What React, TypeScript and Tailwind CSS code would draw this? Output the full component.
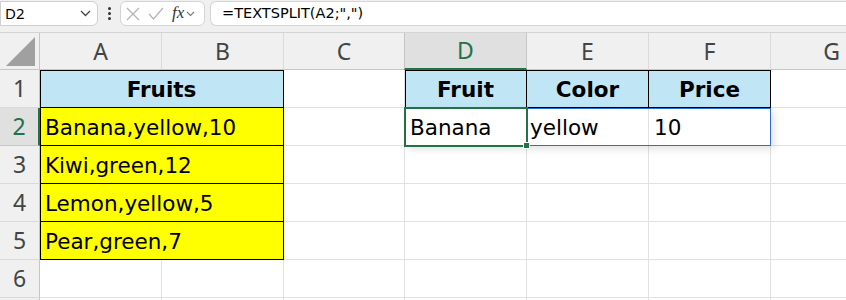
import React from "react";

const cols = ["A", "B", "C", "D", "E", "F", "G"];
const cellFont = { fontFamily: '"DejaVu Sans", sans-serif' };
const headFont = { fontFamily: '"Noto Sans", "Open Sans", sans-serif' };

function ColHeader({ label, active }: { label: string; active?: boolean }) {
  return (
    <div
      style={headFont}
      className={
        active
          ? "flex items-center justify-center bg-[#e0e0e0] border-x border-[#c6c6c6] border-b-2 border-b-[#217346] text-[23px] text-[#217346] -ml-px"
          : "flex items-center justify-center bg-[#f0f0f0] border-r border-[#dadada] border-b border-b-[#c6c6c6] text-[23px] text-[#444]"
      }
    >
      {label}
    </div>
  );
}

function RowHeader({ n, active }: { n?: number; active?: boolean }) {
  return (
    <div
      style={headFont}
      className={
        active
          ? "flex items-center justify-center bg-[#e0e0e0] border-r-2 border-r-[#217346] border-b border-[#c6c6c6] text-[23px] text-[#217346]"
          : "flex items-center justify-center bg-[#f0f0f0] border-r border-r-[#c6c6c6] border-b border-[#dadada] text-[23px] text-[#444]"
      }
    >
      {n}
    </div>
  );
}

function Empty() {
  return <div className="border-r border-b border-[#e1e1e1]" />;
}

function FruitRow({ text }: { text: string }) {
  return (
    <div
      style={cellFont}
      className="col-span-2 flex items-center pl-[5px] pt-1 bg-[#ffff00] border-r border-b border-black shadow-[inset_1px_0_0_#000] text-[21.5px] text-black whitespace-nowrap"
    >
      {text}
    </div>
  );
}

function BlueHead({ text, first }: { text: string; first?: boolean }) {
  return (
    <div
      style={cellFont}
      className={
        first
          ? "flex items-center justify-center pt-1 bg-[#c0e6f5] border-r border-b border-black shadow-[inset_1px_1px_0_#000] text-[21.5px] font-bold text-black"
          : "flex items-center justify-center pt-1 bg-[#c0e6f5] border-r border-b border-black shadow-[inset_0_1px_0_#000] text-[21.5px] font-bold text-black"
      }
    >
      {text}
    </div>
  );
}

function Toolbar() {
  return (
    <div className="flex items-start h-[33px] bg-[#f0f0f0] border-b border-[#d4d4d4] pt-px">
      <div className="flex items-center justify-between w-[98px] h-[25px] bg-white border border-[#cfcfcf] rounded-r-md pl-[4px] pr-[6px]">
        <span style={headFont} className="text-[15px] text-black">
          D2
        </span>
        <svg width="11" height="7" viewBox="0 0 11 7" fill="none">
          <path d="M1 1l4.5 4.5L10 1" stroke="#444" strokeWidth="1.3" />
        </svg>
      </div>
      <div className="flex flex-col items-center justify-center gap-[2px] w-[22px] h-[25px]">
        <span className="w-[3px] h-[3px] rounded-full bg-[#333]" />
        <span className="w-[3px] h-[3px] rounded-full bg-[#333]" />
        <span className="w-[3px] h-[3px] rounded-full bg-[#333]" />
      </div>
      <div className="flex items-center w-[85px] h-[25px] bg-white border border-[#d4d4d4] rounded-md pl-[5px] gap-[8px]">
        <svg width="14" height="14" viewBox="0 0 14 14" fill="none">
          <path d="M1 1l12 12M13 1L1 13" stroke="#b3b3b3" strokeWidth="1.2" />
        </svg>
        <svg width="16" height="13" viewBox="0 0 16 13" fill="none">
          <path d="M1 7l4.5 5L15 1" stroke="#b3b3b3" strokeWidth="1.2" />
        </svg>
        <div className="flex items-center gap-[2px]">
          <span
            style={{ fontFamily: '"Liberation Serif", serif' }}
            className="italic text-[17px] leading-none text-[#333] -mt-[2px]"
          >
            fx
          </span>
          <svg width="9" height="6" viewBox="0 0 9 6" fill="none">
            <path d="M1 1l3.5 3.5L8 1" stroke="#777" strokeWidth="1.1" />
          </svg>
        </div>
      </div>
      <div className="flex items-center flex-1 h-[25px] ml-[5px] bg-white border border-[#d4d4d4] border-r-0 rounded-l-md pl-[11px]">
        <span style={cellFont} className="text-[14.5px] text-black whitespace-nowrap">
          =TEXTSPLIT(A2;",")
        </span>
      </div>
    </div>
  );
}

export default function App() {
  return (
    <div className="w-[846px] h-[300px] overflow-hidden bg-white">
      <Toolbar />
      <div className="grid grid-cols-[40px_122px_122px_121px_122px_122px_122px_122px] grid-rows-[37px_38px_38px_38px_38px_38px_38px_38px] w-[891px]">
        <div className="flex items-end justify-end bg-[#f0f0f0] border-r border-[#c6c6c6] border-b border-b-[#c6c6c6] pr-[4px] pb-[3px]">
          <svg width="29" height="29" viewBox="0 0 29 29">
            <path d="M0 29H29V0Z" fill="#a0a0a0" />
          </svg>
        </div>
        {cols.map((c) => (
          <ColHeader key={c} label={c} active={c === "D"} />
        ))}

        {/* row 1 */}
        <RowHeader n={1} />
        <div
          style={cellFont}
          className="col-span-2 flex items-center justify-center pt-1 bg-[#c0e6f5] border-r border-b border-black shadow-[inset_1px_1px_0_#000] text-[21.5px] font-bold text-black"
        >
          Fruits
        </div>
        <Empty />
        <BlueHead text="Fruit" first />
        <BlueHead text="Color" />
        <BlueHead text="Price" />
        <Empty />

        {/* row 2 */}
        <RowHeader n={2} active />
        <FruitRow text="Banana,yellow,10" />
        <Empty />
        <div
          style={cellFont}
          className="relative flex items-center pl-[5px] pt-1 border-r border-b border-[#e1e1e1] text-[21.5px] text-black"
        >
          Banana
          <div className="absolute top-0 left-0 w-[366px] h-[38px] border border-[#2f6bd0] shadow-[3px_3px_8px_rgba(0,0,0,0.12)] pointer-events-none z-10" />
          <div className="absolute -top-px -left-px w-[124px] h-[40px] border-2 border-[#217346] pointer-events-none z-20" />
          <div className="absolute -right-[4px] -bottom-[4px] w-[7px] h-[7px] bg-[#217346] border border-white z-30" />
        </div>
        <div
          style={cellFont}
          className="flex items-center pl-[3px] pt-1 border-r border-b border-[#e1e1e1] text-[21.5px] text-black"
        >
          yellow
        </div>
        <div
          style={cellFont}
          className="flex items-center pl-[5px] pt-1 border-r border-b border-[#e1e1e1] text-[21.5px] text-black"
        >
          10
        </div>
        <Empty />

        {/* rows 3-5 */}
        {["Kiwi,green,12", "Lemon,yellow,5", "Pear,green,7"].map((t, i) => (
          <React.Fragment key={t}>
            <RowHeader n={i + 3} />
            <FruitRow text={t} />
            <Empty />
            <Empty />
            <Empty />
            <Empty />
            <Empty />
          </React.Fragment>
        ))}

        {/* rows 6-7, the last one is only a sliver at the bottom */}
        {[6, 7].map((n) => (
          <React.Fragment key={n}>
            <RowHeader n={n === 6 ? n : undefined} />
            <Empty />
            <Empty />
            <Empty />
            <Empty />
            <Empty />
            <Empty />
            <Empty />
          </React.Fragment>
        ))}
      </div>
    </div>
  );
}
